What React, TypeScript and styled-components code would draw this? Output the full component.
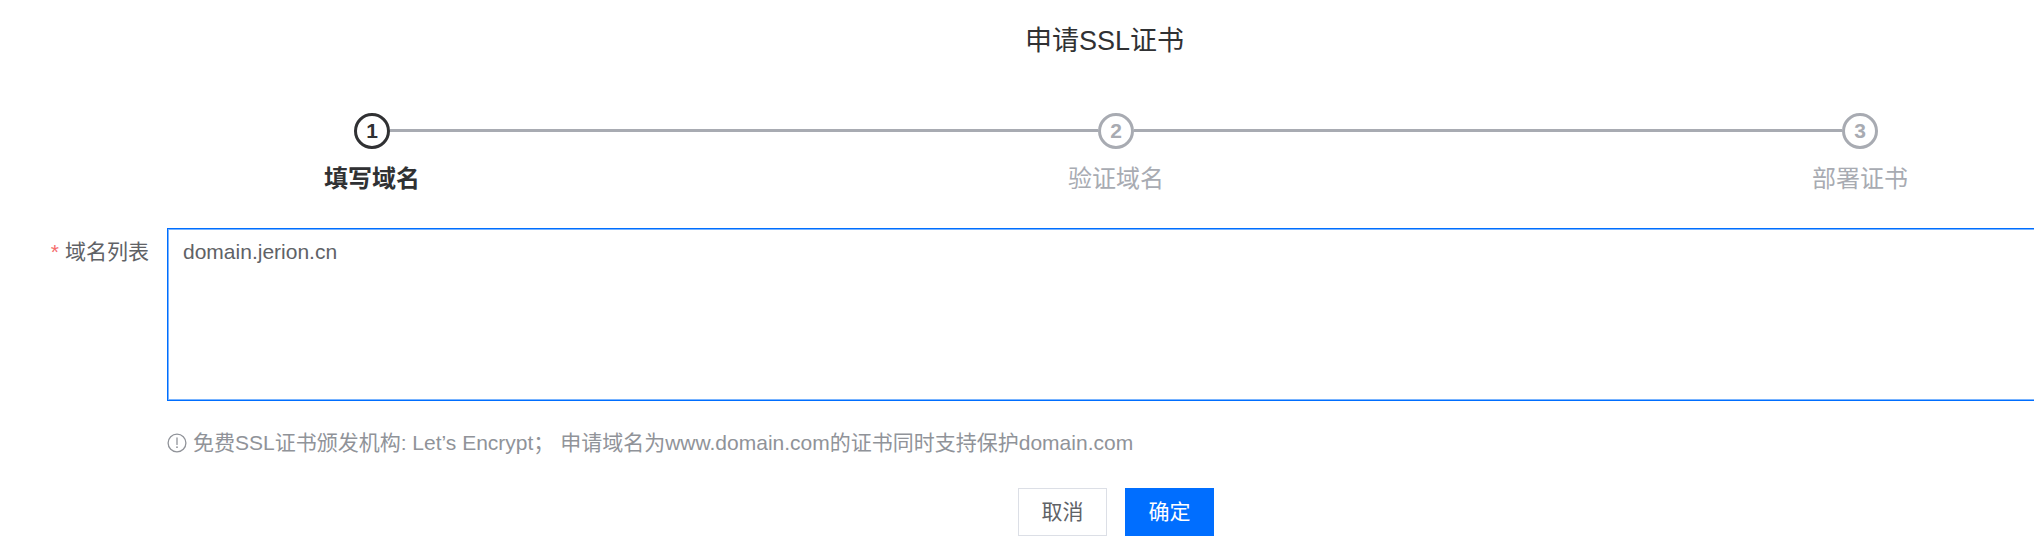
import React, { useState } from "react";
import styled, { createGlobalStyle } from "styled-components";

const GlobalStyle = createGlobalStyle`
  * { box-sizing: border-box; }
  body {
    margin: 0;
    background: #fff;
    overflow: hidden;
    font-family: "Liberation Sans", "Noto Sans CJK SC", sans-serif;
    font-size: 21px;
    color: #606266;
  }
`;

/* The dialog runs past the right edge of the window. */
const Dialog = styled.main`
  width: calc(100% + 198px);
  padding-top: 21px;
`;

const Title = styled.h1`
  margin: 0;
  padding-right: 23px;
  font-size: 27px;
  line-height: 40px;
  font-weight: 400;
  text-align: center;
  color: #303133;
`;

const Steps = styled.ol`
  display: flex;
  margin: 52px 0 0;
  padding: 0;
  list-style: none;
`;

const Step = styled.li<{ $active: boolean }>`
  flex: 1;
  color: ${(p) => (p.$active ? "#303133" : "#a8abb2")};
  font-weight: ${(p) => (p.$active ? 700 : 400)};
`;

const StepHead = styled.div`
  display: flex;
  align-items: center;
`;

const Line = styled.span<{ $hidden: boolean }>`
  flex: 1;
  height: 3px;
  margin-bottom: 1px;
  background: ${(p) => (p.$hidden ? "transparent" : "#a8abb2")};
`;

const Circle = styled.span`
  display: flex;
  align-items: center;
  justify-content: center;
  width: 36px;
  height: 36px;
  border: 3px solid currentColor;
  border-radius: 50%;
  font-weight: 700;
`;

const StepTitle = styled.div`
  margin-top: 10px;
  font-size: 24px;
  line-height: 40px;
  text-align: center;
`;

const FormRow = styled.div`
  display: flex;
  align-items: flex-start;
  margin-top: 29px;
`;

const Label = styled.label`
  width: 167px;
  padding-right: 18px;
  line-height: 48px;
  text-align: right;
`;

const Required = styled.span`
  margin-right: 6px;
  color: #f56c6c;
`;

const DomainInput = styled.textarea`
  display: block;
  flex: 1;
  height: 173px;
  padding: 7px 15px;
  border: 1px solid #006eff;
  border-radius: 0;
  outline: none;
  box-shadow: inset 0 0 0 1px #78b3ff;
  resize: none;
  background: #fff;
  color: #606266;
  font-family: inherit;
  font-size: 21px;
  line-height: 32px;
`;

const Hint = styled.p`
  display: flex;
  align-items: center;
  gap: 6px;
  margin: 26px 0 0 167px;
  line-height: 32px;
  color: #909399;
  white-space: pre;
`;

const Actions = styled.div`
  display: flex;
  justify-content: center;
  gap: 18px;
  margin-top: 29px;
`;

const Button = styled.button<{ $primary?: boolean }>`
  width: 89px;
  height: 48px;
  padding: 0 0 4px;
  border: 1px solid ${(p) => (p.$primary ? "#006eff" : "#dcdfe6")};
  background: ${(p) => (p.$primary ? "#006eff" : "#fff")};
  color: ${(p) => (p.$primary ? "#fff" : "#606266")};
  font-family: inherit;
  font-size: 21px;
`;

const WarningIcon = () => (
  <svg width="20" height="20" viewBox="0 0 20 20" fill="none" stroke="currentColor" aria-hidden="true">
    <circle cx="10" cy="10" r="8.9" strokeWidth="1.3" />
    <path d="M10 5v6.4" strokeWidth="1.3" strokeLinecap="round" />
    <circle cx="10" cy="14.2" r="0.9" fill="currentColor" stroke="none" />
  </svg>
);

const steps = ["填写域名", "验证域名", "部署证书"];

export default function App() {
  const [domains, setDomains] = useState("domain.jerion.cn");
  const current = 0;
  return (
    <>
      <GlobalStyle />
      <Dialog>
        <Title>申请SSL证书</Title>
        <Steps>
          {steps.map((title, i) => (
            <Step key={title} $active={i === current}>
              <StepHead>
                <Line $hidden={i === 0} />
                <Circle>{i + 1}</Circle>
                <Line $hidden={i === steps.length - 1} />
              </StepHead>
              <StepTitle>{title}</StepTitle>
            </Step>
          ))}
        </Steps>
        <FormRow>
          <Label htmlFor="domains">
            <Required>*</Required>域名列表
          </Label>
          <DomainInput
            id="domains"
            spellCheck={false}
            value={domains}
            onChange={(e) => setDomains(e.target.value)}
          />
        </FormRow>
        <Hint>
          <WarningIcon />
          <span>免费SSL证书颁发机构: Let’s Encrypt； 申请域名为www.domain.com的证书同时支持保护domain.com</span>
        </Hint>
        <Actions>
          <Button type="button">取消</Button>
          <Button type="button" $primary>确定</Button>
        </Actions>
      </Dialog>
    </>
  );
}
